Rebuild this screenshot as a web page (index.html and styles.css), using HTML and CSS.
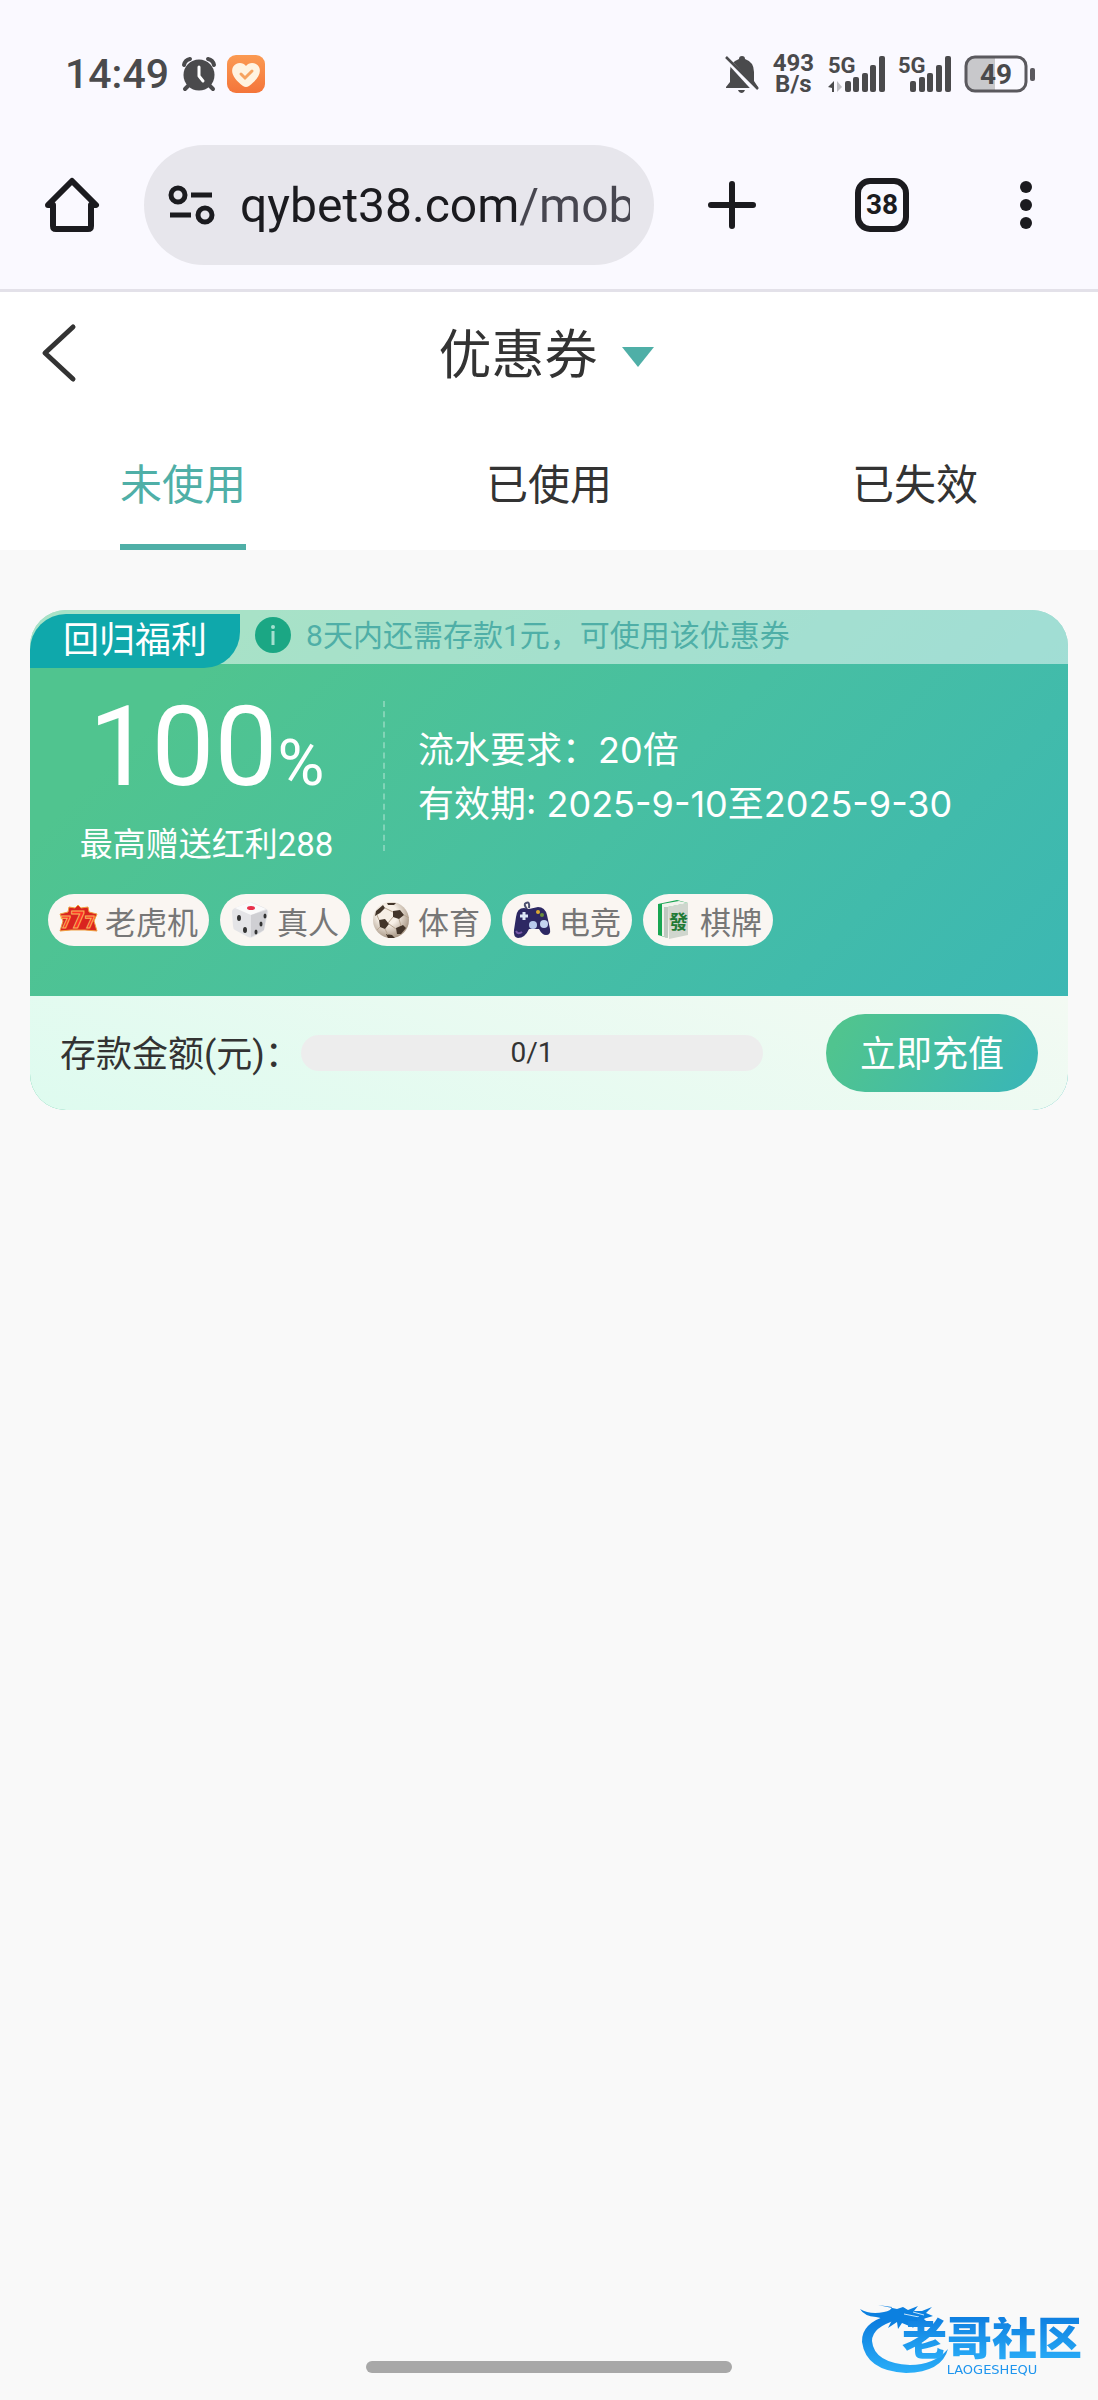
FILE: index.html
```html
<!DOCTYPE html>
<html lang="zh-CN">
<head>
    <meta charset="UTF-8">
    <meta name="viewport" content="width=device-width, initial-scale=1">
    <title>优惠券</title>
    <link rel="stylesheet" href="styles.css">
</head>
<body>
<!-- 状态栏 -->
<div class="status">
    <span class="time">14:49</span>
    <svg class="alarm" width="36" height="36" viewBox="0 0 36 36">
        <g fill="none" stroke="#4a4a4c" stroke-width="4" stroke-linecap="round">
            <path d="M3 9Q4 4 9 3M33 9Q32 4 27 3M8 29L4 33M28 29L32 33"/>
        </g>
        <circle cx="18" cy="19" r="15.500" fill="#4a4a4c"/>
        <path d="M18 11V20L22 25" fill="none" stroke="#fff" stroke-width="3" stroke-linecap="round" stroke-linejoin="round"/>
    </svg>
    <svg class="health" width="38" height="38" viewBox="0 0 38 38">
        <defs>
            <linearGradient id="orange" x1="0" y1="0" x2="0" y2="1">
                <stop offset="0" stop-color="#fb9a52"/>
                <stop offset="1" stop-color="#f4753a"/>
            </linearGradient>
        </defs>
        <rect width="38" height="38" rx="9" fill="url(#orange)"/>
        <path d="M19 11C16 7 9 7 6 12C3 18 8 25 16 31Q19 33 22 31C30 25 35 18 32 12C29 7 22 7 19 11Z" fill="#fff3e0"/>
        <path d="M14 19L18 23L25 16" fill="none" stroke="#f6a35f" stroke-width="3" stroke-linecap="round"/>
    </svg>
    <div class="status-right">
        <svg width="34" height="38" viewBox="0 0 34 38">
            <path d="M17 1Q20 1 20 4Q29 7 29 17V26L33 32V33H1V32L5 27V16Q5 7 14 4Q14 1 17 1Z" fill="#4a4a4c"/>
            <path d="M13 35H20Q19 38 17 38Q14 38 13 35Z" fill="#4a4a4c"/>
            <path d="M-1 1L31 36" stroke="#faf9ff" stroke-width="5"/>
            <path d="M1 2L33 34" stroke="#4a4a4c" stroke-width="2.500"/>
        </svg>
        <div class="speed">
            <span>493</span>
            <span>B/s</span>
        </div>
        <svg width="58" height="38" viewBox="0 0 58 38" fill="#4a4a4c">
            <text class="net" x="0" y="18">5G</text>
            <path d="M6 26V37H4V33L0 32Z"/>
            <path d="M9 26V37L14 32Z" fill="#bdbdc2"/>
            <rect x="17" y="26" width="6" height="11" rx="2"/>
            <rect x="25" y="22" width="6" height="15" rx="2"/>
            <rect x="34" y="18" width="6" height="19" rx="2"/>
            <rect x="42" y="10" width="6" height="27" rx="2"/>
            <rect x="51" y="1" width="6" height="36" rx="2"/>
        </svg>
        <svg width="54" height="38" viewBox="0 0 54 38" fill="#4a4a4c">
            <text class="net" x="0" y="18">5G</text>
            <rect x="12" y="26" width="6" height="11" rx="2"/>
            <rect x="21" y="22" width="6" height="15" rx="2"/>
            <rect x="29" y="18" width="6" height="19" rx="2"/>
            <rect x="38" y="10" width="6" height="27" rx="2"/>
            <rect x="47" y="1" width="6" height="36" rx="2"/>
        </svg>
        <svg class="battery" width="72" height="38" viewBox="0 0 72 38">
            <path d="M11 3H31V35H11Q3 35 3 27V11Q3 3 11 3Z" fill="#c8c8cb"/>
            <rect x="2" y="2" width="60" height="34" rx="9" fill="none" stroke="#5a595e" stroke-width="3"/>
            <rect x="66" y="13" width="5" height="13" rx="2" fill="#5a595e"/>
            <text class="percent" x="32" y="29" text-anchor="middle">49</text>
        </svg>
    </div>
</div>

<!-- 浏览器工具栏 -->
<div class="toolbar">
    <button class="tool home" aria-label="主页">
        <svg width="56" height="56" viewBox="0 0 56 56" fill="none" stroke="#1b1b1f" stroke-width="6" stroke-linejoin="round" stroke-linecap="round">
            <path d="M4 28L28 4L52 28H47V49Q47 52 44 52H12Q9 52 9 49V28Z"/>
        </svg>
    </button>
    <div class="address">
        <svg width="46" height="40" viewBox="0 0 46 40" fill="none" stroke="#1b1b1f" stroke-width="5">
            <circle cx="10" cy="10" r="7"/>
            <path d="M23 10H44M2 30H23"/>
            <circle cx="37" cy="30" r="7"/>
        </svg>
        <input class="url" type="text" value="qybet38.com/mob" aria-label="网址">
    </div>
    <button class="tool plus" aria-label="新标签页">
        <svg width="48" height="48" viewBox="0 0 48 48" stroke="#1b1b1f" stroke-width="6" stroke-linecap="round">
            <path d="M24 3V45M3 24H45"/>
        </svg>
    </button>
    <button class="tool"><span class="count">38</span></button>
    <button class="tool" aria-label="更多">
        <svg width="12" height="48" viewBox="0 0 12 48" fill="#1b1b1f">
            <circle cx="6" cy="6" r="6"/>
            <circle cx="6" cy="24" r="6"/>
            <circle cx="6" cy="42" r="6"/>
        </svg>
    </button>
</div>

<!-- 标题 -->
<header class="header">
    <a class="back" href="#" aria-label="返回">
        <svg width="36" height="58" viewBox="0 0 36 58" fill="none" stroke="#333" stroke-width="5" stroke-linecap="round" stroke-linejoin="round">
            <path d="M33 3L5 29L33 55"/>
        </svg>
    </a>
    <button class="title">优惠券<span class="caret"></span></button>
</header>

<nav class="tabs">
    <a class="current" href="#"><span>未使用</span></a>
    <a href="#"><span>已使用</span></a>
    <a href="#"><span>已失效</span></a>
</nav>

<main class="main">
    <section class="coupon">
        <div class="tip">
            <span class="badge">回归福利</span>
            <svg width="36" height="36" viewBox="0 0 36 36">
                <circle cx="18" cy="18" r="18" fill="#1ba784"/>
                <circle cx="18" cy="10" r="2" fill="#a5e0cf"/>
                <path d="M18 14V28" stroke="#a5e0cf" stroke-width="3"/>
            </svg>
            <span class="tip-text">8天内还需存款1元，可使用该优惠券</span>
        </div>
        <div class="info">
            <div class="amount">
                <p class="rate">100<small>%</small></p>
                <p class="max">最高赠送红利288</p>
            </div>
            <div class="detail">
                <p>流水要求：20倍</p>
                <p>有效期: 2025-9-10至2025-9-30</p>
            </div>
        </div>
        <ul class="types">
            <li>
                <svg width="38" height="38" viewBox="0 0 38 38">
                    <path d="M1 13L9 11L10 6L16 7L19 4L22 7L29 6L30 11L38 13L35 20L38 30L26 29L12 29L1 30L4 20Z" fill="#d9241f" stroke="#f0a040" stroke-width="1"/>
                    <g class="seven" fill="#ff3226" stroke="#f7b45a" stroke-width="1">
                        <text x="2" y="27" font-size="17">7</text>
                        <text x="26" y="27" font-size="17">7</text>
                        <text x="12" y="27" font-size="24">7</text>
                    </g>
                </svg>
                老虎机
            </li>
            <li>
                <svg width="38" height="38" viewBox="0 0 38 38">
                    <path d="M19 1Q21 1 34 7Q38 9 37 12L33 29Q32 31 22 36Q20 37 17 36L4 29Q2 28 2 25L1 11Q1 8 4 7Z" fill="#e4e4e7"/>
                    <path d="M4 7L19 1L35 8L20 14Z" fill="#fafafa"/>
                    <path d="M20 14L36 9L33 29L20 36Z" fill="#cfcfd3"/>
                    <ellipse cx="20" cy="7" rx="4" ry="2" fill="#e8304a"/>
                    <g fill="#333">
                        <ellipse cx="8" cy="17" rx="2" ry="3"/>
                        <ellipse cx="14" cy="29" rx="2" ry="3"/>
                        <ellipse cx="34" cy="15" rx="1.500" ry="2.500"/>
                        <ellipse cx="30" cy="23" rx="1.500" ry="2.500"/>
                        <ellipse cx="25" cy="31" rx="1.500" ry="2.500"/>
                    </g>
                </svg>
                真人
            </li>
            <li>
                <svg width="38" height="38" viewBox="0 0 38 38">
                    <defs>
                        <radialGradient id="ball" cx="0.4" cy="0.35" r="0.7">
                            <stop offset="0.4" stop-color="#f7efe6"/>
                            <stop offset="1" stop-color="#a08e7c"/>
                        </radialGradient>
                    </defs>
                    <circle cx="19" cy="19" r="18" fill="url(#ball)"/>
                    <path d="M21 10L28 9L32 14L27 18L21 16ZM7 19L13 18L17 23L13 28L8 26ZM24 27L31 24L34 27L29 33L25 33ZM4 10L11 4L13 7L8 12L3 15ZM15 2L24 2L22 4L16 4ZM14 33L20 34L23 37L16 37Z" fill="#43352a"/>
                    <path d="M13 7L21 11M21 16L16 22M27 18L29 25M32 14L37 17M17 23L24 28M8 26L5 29M13 28L16 34M7 19L5 14" stroke="#b8a692" stroke-width="1"/>
                </svg>
                体育
            </li>
            <li>
                <svg width="38" height="38" viewBox="0 0 38 38">
                    <path d="M14 8Q10 3 13 2Q17 0 16 7" fill="none" stroke="#4d5070" stroke-width="2"/>
                    <path d="M3 16Q4 7 11 7L16 8L25 6Q32 6 34 14L37 28Q38 34 33 34Q29 34 26 28L16 28Q12 37 5 37Q0 36 1 29Z" fill="#2d2863"/>
                    <path d="M11 11V19M7 15H15" stroke="#dce6f5" stroke-width="3"/>
                    <circle cx="20" cy="24" r="4" fill="#b9cbed"/>
                    <circle cx="31" cy="23" r="4" fill="#c4d3f0"/>
                    <circle cx="25" cy="11" r="2" fill="#dba932"/>
                    <circle cx="29" cy="14" r="2" fill="#6b8e3d"/>
                    <path d="M3 30Q5 34 9 31" fill="none" stroke="#7858a8" stroke-width="2"/>
                </svg>
                电竞
            </li>
            <li>
                <svg width="38" height="42" viewBox="0 0 38 42">
                    <path d="M4 5L23 1L34 4L14 8V39L4 36Z" fill="#18a552"/>
                    <path d="M8 5L25 2L34 4L14 8V39L8 37Z" fill="#f1f2ec"/>
                    <path d="M10 8L14 8V39L10 38Z" fill="#bfc8c0"/>
                    <path d="M14 8L34 4V36L15 40Z" fill="#d0d6ce"/>
                    <text class="tile" x="15" y="30">發</text>
                </svg>
                棋牌
            </li>
        </ul>
        <div class="deposit">
            <span class="label">存款金额(元)：</span>
            <div class="bar" role="progressbar" aria-valuemin="0" aria-valuemax="1" aria-valuenow="0">0/1</div>
            <button class="pay">立即充值</button>
        </div>
    </section>
</main>

<div class="handle"></div>

<div class="mark">
    <svg width="94" height="72" viewBox="0 0 94 72">
        <defs>
            <linearGradient id="blue" x1="0" y1="0" x2="0" y2="1">
                <stop offset="0" stop-color="#0a78dc"/>
                <stop offset="1" stop-color="#2aaef8"/>
            </linearGradient>
        </defs>
        <path d="M31 12Q3 20 4 39Q8 68 48 70Q84 69 90 46Q76 62 52 62Q16 60 14 38Q14 24 39 17Z" fill="url(#blue)"/>
        <path d="M2 6Q12 12 26 9Q33 8 34 4L20 2L39 6L45 4L50 7L60 3L56 8L64 8L74 4L68 10L75 13L65 16L72 20L72 22L60 21L50 19L56 25L44 20L40 26L39 19L30 25L34 17L22 19Q27 15 18 14Q6 13 2 6Z" fill="#0c80e0"/>
        <path d="M46 11L61 14M55 9L66 12" stroke="#c5e4fb" stroke-width="1"/>
    </svg>
    <div class="mark-text">
        <b>老哥社区</b>
        <span>LAOGESHEQU</span>
    </div>
</div>
</body>
</html>
```
FILE: styles.css
```css
* {
    padding: 0;
    margin: 0;
    list-style: none;
    border: 0;
    box-sizing: border-box;
}

body {
    min-height: 100vh;
    background: #f9f9f9;
    color: #333;
    font-family: Roboto, "Noto Sans CJK SC", sans-serif;
    font-size: 36px;
}

button {
    background: none;
    font-family: inherit;
    color: inherit;
    cursor: pointer;
}

a {
    color: inherit;
    text-decoration: none;
}

svg {
    flex: none;
    display: block;
    overflow: visible;
}

/* 状态栏 */
.status {
    height: 145px;
    padding: 2px 62px 0 65px;
    display: flex;
    align-items: center;
    background: #faf9ff;
    color: #4a4a4c;
}

.time {
    font-size: 41px;
    font-weight: 500;
}

.alarm {
    margin-left: 12px;
}

.health {
    margin-left: 10px;
}

.status-right {
    margin-left: auto;
    display: flex;
    align-items: center;
    gap: 12px;
}

.speed {
    display: flex;
    flex-direction: column;
    margin: 0 2px;
    font-size: 24px;
    line-height: 21px;
    font-weight: 700;
    text-align: center;
}

.net {
    font-size: 22px;
    font-weight: 700;
}

.percent {
    font-size: 28px;
    font-weight: 700;
    fill: #4a4a4c;
}

/* 工具栏 */
.toolbar {
    height: 147px;
    padding-bottom: 24px;
    display: flex;
    background: #faf9ff;
    border-bottom: 3px solid #e3e1e9;
}

.tool {
    flex: none;
    width: 144px;
    height: 120px;
    display: flex;
    align-items: center;
    justify-content: center;
}

.plus {
    width: 156px;
}

.address {
    flex: 1;
    min-width: 0;
    height: 120px;
    padding: 0 24px;
    display: flex;
    align-items: center;
    gap: 26px;
    background: #e7e6ec;
    border-radius: 60px;
}

.url {
    flex: 1;
    min-width: 0;
    outline: none;
    font-family: inherit;
    font-size: 48px;
    color: transparent;
    background: linear-gradient(to right, #1b1b1f 278px, #47464f 278px);
    -webkit-background-clip: text;
    background-clip: text;
}

.count {
    width: 54px;
    height: 54px;
    border: 6px solid #1b1b1f;
    border-radius: 15px;
    line-height: 42px;
    font-size: 28px;
    font-weight: 700;
    color: #1b1b1f;
}

/* 标题和标签 */
.header {
    height: 122px;
    padding: 0 46px 0 40px;
    display: grid;
    grid-template-columns: 1fr auto 1fr;
    align-items: center;
    background: #fff;
}

.title {
    display: flex;
    align-items: center;
    gap: 24px;
    padding-bottom: 4px;
    font-size: 53px;
}

.caret {
    margin-top: 12px;
    border: 16px solid transparent;
    border-top: 20px solid #4fafa7;
    border-bottom: 0;
}

.tabs {
    display: flex;
    background: #fff;
    font-size: 42px;
}

.tabs a {
    flex: 1;
    text-align: center;
}

.tabs span {
    display: inline-block;
    height: 136px;
    line-height: 144px;
}

.tabs .current span {
    color: #4fafa7;
    border-bottom: 6px solid #4fafa7;
}

/* 优惠券 */
.main {
    padding: 60px 30px;
}

.coupon {
    border-radius: 36px;
    overflow: hidden;
    color: #fff;
    background: linear-gradient(135deg, #50c48f 15%, #47bfa2 52%, #3bb7b4 95%);
}

.tip {
    height: 54px;
    display: flex;
    align-items: center;
    gap: 15px;
    padding-bottom: 4px;
    background: rgba(255, 255, 255, 0.5);
    color: #4fafa7;
    font-size: 30px;
}

.tip-text {
    padding-bottom: 4px;
}

.badge {
    align-self: flex-start;
    height: 54px;
    padding: 0 33px;
    margin-top: 4px;
    line-height: 54px;
    font-size: 36px;
    color: #fff;
    background: #0fa8ab;
    border-radius: 36px 0 36px 0;
}

.info {
    display: flex;
    align-items: flex-start;
    padding-top: 37px;
}

.amount {
    width: 353px;
    text-align: center;
}

.rate {
    font-size: 112px;
    line-height: 92px;
}

.rate small {
    font-size: 64px;
}

.max {
    margin-top: 10px;
    font-size: 33px;
    line-height: 50px;
}

.detail {
    height: 150px;
    padding: 22px 0 0 33px;
    border-left: 2px dashed rgba(255, 255, 255, 0.3);
    font-family: Inter, "Noto Sans CJK SC", sans-serif;
    line-height: 54px;
}

.types {
    display: flex;
    flex-wrap: wrap;
    gap: 11px;
    padding: 24px 18px 50px;
}

.types li {
    height: 52px;
    padding: 0 11px;
    display: flex;
    align-items: center;
    gap: 8px;
    border-radius: 26px;
    background: #faf6f2;
    color: #777;
    font-size: 31px;
}

.seven {
    font-weight: 900;
}

.tile {
    font-size: 19px;
    font-weight: 700;
    fill: #1f7a35;
}

.deposit {
    height: 114px;
    padding: 0 30px;
    display: flex;
    align-items: center;
    color: #333;
    background: linear-gradient(20deg, #defbef, #f3faf3);
}

.label {
    padding-bottom: 4px;
}

.bar {
    flex: 1;
    height: 36px;
    margin-right: 63px;
    border-radius: 18px;
    background: #ededed;
    line-height: 36px;
    text-align: center;
    font-size: 28px;
}

.pay {
    height: 78px;
    padding: 0 34px 4px;
    border-radius: 39px;
    background: linear-gradient(120deg, #50c48f 10%, #3bb7b4 90%);
    color: #fff;
    font-size: 36px;
}

/* 底部横条和水印 */
.handle {
    position: fixed;
    left: 50%;
    bottom: 27px;
    width: 366px;
    height: 12px;
    margin-left: -183px;
    border-radius: 6px;
    background: #a8a8a8;
}

.mark {
    position: fixed;
    right: 16px;
    bottom: 23px;
    display: flex;
}

.mark-text {
    display: flex;
    flex-direction: column;
    align-items: center;
    margin: 14px 0 0 -50px;
    color: #1e95ee;
}

.mark-text b {
    line-height: 46px;
    font-size: 45px;
    font-weight: 900;
    background: linear-gradient(#0f7fe0, #2aaef8);
    -webkit-background-clip: text;
    background-clip: text;
    color: transparent;
}

.mark-text span {
    line-height: 14px;
    font-family: "DejaVu Sans", sans-serif;
    font-size: 13px;
}
```
